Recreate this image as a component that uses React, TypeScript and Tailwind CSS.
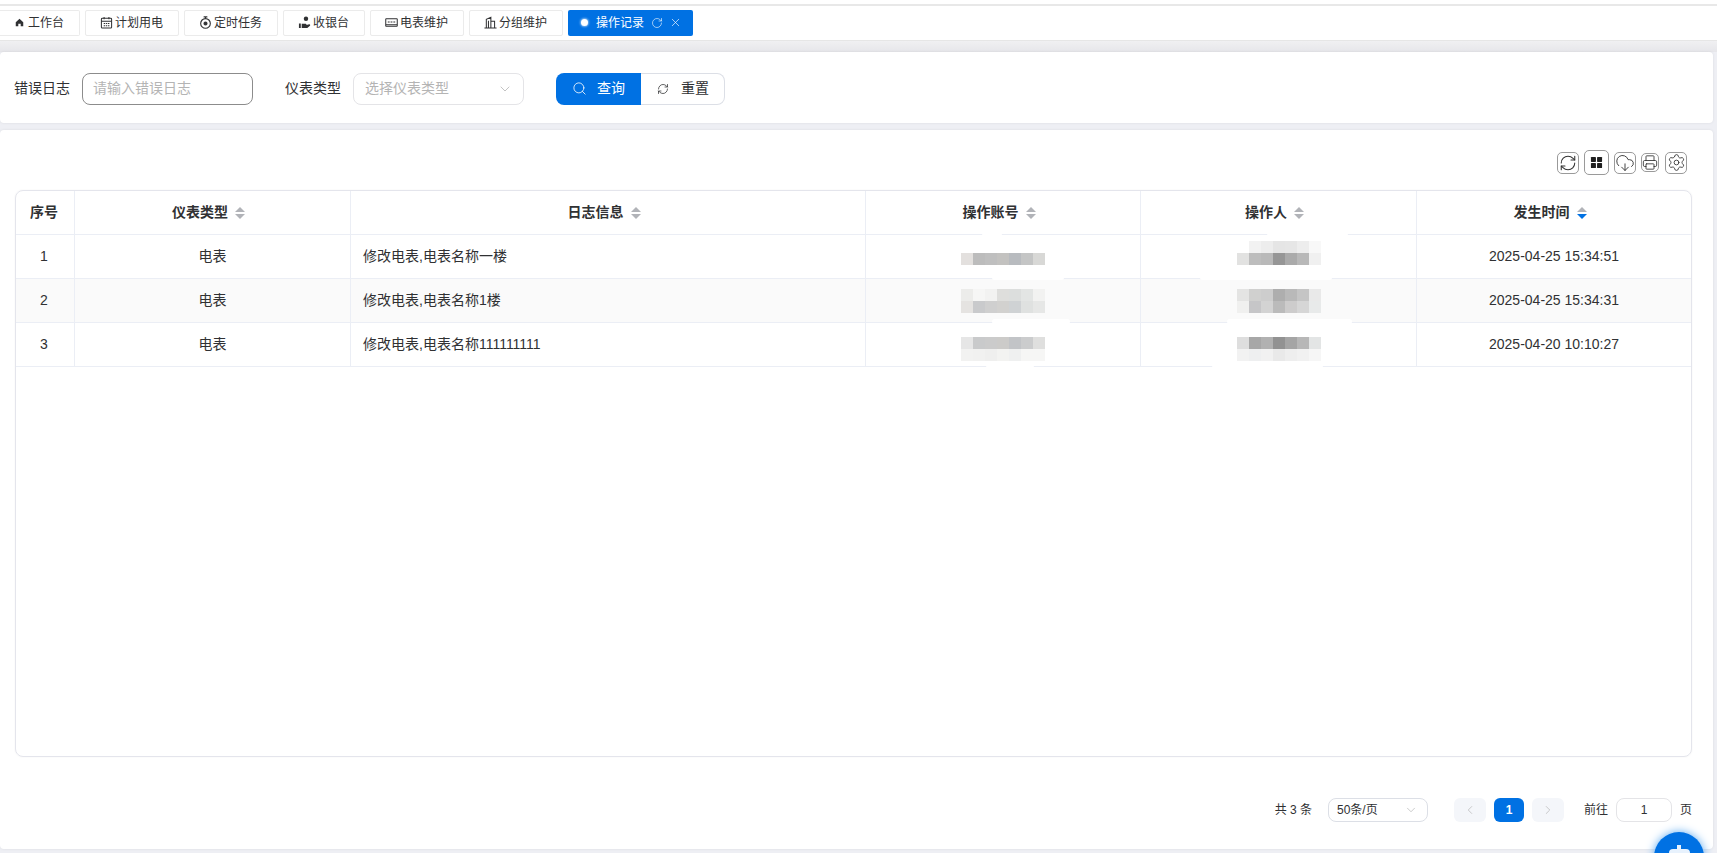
import { ChevronDown, ChevronLeft, ChevronRight, CloudDownload, Printer, RefreshCw, RotateCw, Search, Settings, X } from "lucide-react"
import type { ReactNode } from "react"

function HomeIcon() {
  return (
    <svg viewBox="0 0 12 12" className="h-[9px] w-[9px] fill-[#303133]">
      <path d="M6 1 11 5.6V11H7.6V7.6H4.4V11H1V5.6Z" />
    </svg>
  )
}

function CalendarIcon() {
  return (
    <svg viewBox="0 0 14 14" className="h-[13px] w-[13px] fill-none stroke-[#303133] stroke-[1.1]">
      <rect x="1.5" y="2.5" width="11" height="10.5" rx="1" />
      <path d="M1.5 5.6h11M4.4 1v2.6M9.6 1v2.6M4 8h1.5M6.3 8h1.5M8.6 8h1.5M4 10.4h1.5M6.3 10.4h1.5M8.6 10.4h1.5" />
    </svg>
  )
}

function TimerIcon() {
  return (
    <svg viewBox="0 0 14 14" className="h-[13px] w-[13px] fill-none stroke-[#303133] stroke-[1.2]">
      <circle cx="7" cy="8" r="5.2" />
      <circle cx="7" cy="8" r="1.6" className="fill-[#303133]" />
      <path d="M5 1h4M7 1v1.6" />
    </svg>
  )
}

function CashierIcon() {
  return (
    <svg viewBox="0 0 14 14" className="h-[13px] w-[13px] fill-[#303133]">
      <circle cx="8.6" cy="3" r="2.4" />
      <path d="M1 8h2v5H1ZM4 8.4h3.6c1 0 1.6.6 1.7 1.4L12 8.9c.8-.3 1.6.7.9 1.5L10 13H4Z" />
    </svg>
  )
}

function MeterIcon() {
  return (
    <svg viewBox="0 0 14 14" className="h-[13px] w-[13px] fill-none stroke-[#303133] stroke-[1.1]">
      <rect x="0.8" y="3" width="12.4" height="8" rx="0.6" />
      <path d="M3 6.5h2M6 6.5h2M9 6.5h2M1 9.4h12" />
    </svg>
  )
}

function GroupIcon() {
  return (
    <svg viewBox="0 0 14 14" className="h-[13px] w-[13px] fill-none stroke-[#303133] stroke-[1.1]">
      <path d="M.5 13h13M2.5 13V3.6L7.4 1.4V13M7.4 5.6h4V13M4.8 13V5" />
    </svg>
  )
}

function GridIcon() {
  return (
    <svg viewBox="0 0 14 14" className="h-[13px] w-[13px] fill-[#1f1f1f]">
      <rect x="1" y="1" width="5.4" height="5.4" rx="0.7" />
      <rect x="7.6" y="1" width="5.4" height="5.4" rx="0.7" />
      <rect x="1" y="7.6" width="5.4" height="5.4" rx="0.7" />
      <rect x="7.6" y="7.6" width="5.4" height="5.4" rx="0.7" />
    </svg>
  )
}

function SortIcon({ active }: { active?: boolean }) {
  return (
    <svg viewBox="0 0 10 12" className="ml-[7px] mr-[8px] h-[12px] w-[10px]">
      <path d="M5 0 10 5H0Z" className="fill-[#b1b3b8]" />
      <path d="M0 7h10L5 12Z" className={active ? "fill-[#0071e3]" : "fill-[#b1b3b8]"} />
    </svg>
  )
}

const tabs = [
  { name: "计划用电", icon: <CalendarIcon /> },
  { name: "定时任务", icon: <TimerIcon /> },
  { name: "收银台", icon: <CashierIcon /> },
  { name: "电表维护", icon: <MeterIcon /> },
  { name: "分组维护", icon: <GroupIcon /> },
]

function TabBar() {
  return (
    <div className="flex h-[35px] items-center gap-[5px] border-b border-[#e6e6e6] bg-white pb-px text-[12px] text-[#303133]">
      <div className="flex h-[26px] w-[80px] items-center justify-end gap-[4px] rounded-r-[2px] border border-l-0 border-[#ebebeb] pr-[15px]">
        <HomeIcon />
        工作台
      </div>
      {tabs.map((tab) => (
        <div key={tab.name} className="flex h-[26px] items-center gap-[2px] rounded-[2px] border border-[#ebebeb] pl-[14px] pr-[15px]">
          {tab.icon}
          {tab.name}
        </div>
      ))}
      <div className="flex h-[26px] w-[125px] items-center rounded-[2px] bg-[#0071e3] pl-[13px] text-white">
        <span className="mr-[8px] h-[7px] w-[7px] rounded-full bg-white shadow-[0_0_2px_1px_rgba(255,255,255,0.5)]" />
        <span>操作记录</span>
        <RotateCw size={12} strokeWidth={1.2} className="ml-[7px]" />
        <X size={13} strokeWidth={1.2} className="ml-[6px]" />
      </div>
    </div>
  )
}

function SearchCard() {
  return (
    <div className="mr-[4px] flex h-[71px] items-center rounded-[4px] bg-white pt-[2px] text-[14px] text-[#303133] shadow-[0_0_3px_rgba(0,0,0,0.08)]">
      <span className="ml-[14px] w-[56px]">错误日志</span>
      <div className="ml-[12px] flex h-[32px] w-[171px] items-center rounded-[8px] border border-[#8c8c8c] px-[10px] text-[#b4b4b4]">
        请输入错误日志
      </div>
      <span className="ml-[32px] w-[56px]">仪表类型</span>
      <div className="ml-[12px] flex h-[32px] w-[171px] items-center justify-between rounded-[8px] border border-[#e4e4e7] pl-[11px] pr-[10px] text-[#b4b4b4]">
        选择仪表类型
        <ChevronDown size={16} strokeWidth={1.2} color="#b4b4b4" />
      </div>
      <div className="ml-[32px] flex h-[32px] w-[169px]">
        <div className="flex w-[85px] items-center rounded-l-[8px] bg-[#0071e3] pl-[16px] text-white">
          <Search size={15} strokeWidth={1.3} />
          <span className="ml-[10px]">查询</span>
        </div>
        <div className="flex w-[84px] items-center rounded-r-[8px] border border-l-0 border-[#dcdfe6] pl-[16px]">
          <RefreshCw size={12} strokeWidth={1.5} />
          <span className="ml-[12px]">重置</span>
        </div>
      </div>
    </div>
  )
}

function ToolButton({ children, className }: { children: ReactNode; className: string }) {
  return (
    <div className={`flex items-center justify-center rounded-[5px] border border-[#9a9a9a] text-[#333] ${className}`}>
      {children}
    </div>
  )
}

function Toolbar() {
  return (
    <div className="mb-[15px] flex h-[25px] items-center justify-end pr-[5px]">
      <ToolButton className="h-[22px] w-[22px]">
        <RefreshCw size={18} strokeWidth={1.4} />
      </ToolButton>
      <ToolButton className="ml-[5px] h-[25px] w-[25px]">
        <GridIcon />
      </ToolButton>
      <ToolButton className="ml-[5px] h-[22px] w-[22px]">
        <CloudDownload size={20} strokeWidth={1.1} />
      </ToolButton>
      <ToolButton className="ml-[5px] h-[19px] w-[18px]">
        <Printer size={17} strokeWidth={1.3} />
      </ToolButton>
      <ToolButton className="ml-[6px] h-[22px] w-[22px]">
        <Settings size={19} strokeWidth={1.1} />
      </ToolButton>
    </div>
  )
}

function Mosaic({ rows, className }: { rows: string[][]; className: string }) {
  return (
    <div className={`mx-auto w-fit ${className}`}>
      {rows.map((row, i) => (
        <div key={i} className="flex">
          {row.map((color, j) => (
            <span key={j} className={`h-[12px] w-[12px] ${color}`} />
          ))}
        </div>
      ))}
    </div>
  )
}

const rowsData = [
  {
    id: 1,
    info: "修改电表,电表名称一楼",
    time: "2025-04-25 15:34:51",
    account: { className: "mt-[18px]", rows: [["bg-[#e3e0de]", "bg-[#bcbcbc]", "bg-[#bfbfbf]", "bg-[#c3c2c0]", "bg-[#b8bbbf]", "bg-[#c4c5c5]", "bg-[#d8d8d6]"]] },
    person: {
      className: "mt-[6px]",
      rows: [
        ["bg-white", "bg-[#f2f2f2]", "bg-[#ededed]", "bg-[#e5e5e5]", "bg-[#e6e6e6]", "bg-[#ededed]", "bg-[#f8f8f8]"],
        ["bg-[#e2e2e1]", "bg-[#bdbdbd]", "bg-[#b9b9b9]", "bg-[#969696]", "bg-[#aaaaaa]", "bg-[#b8b8b8]", "bg-[#f0f0f0]"],
      ],
    },
  },
  {
    id: 2,
    info: "修改电表,电表名称1楼",
    time: "2025-04-25 15:34:31",
    account: {
      className: "mt-[10px]",
      rows: [
        ["bg-[#ececea]", "bg-[#f6f6f5]", "bg-[#f2f2f1]", "bg-[#dededc]", "bg-[#dcdedd]", "bg-[#e3e5e4]", "bg-[#f2f2f1]"],
        ["bg-[#e5e3e1]", "bg-[#c9cacc]", "bg-[#cfcfcf]", "bg-[#d2d1cf]", "bg-[#cfd2d4]", "bg-[#dfe1e0]", "bg-[#e6e7e6]"],
      ],
    },
    person: {
      className: "mt-[10px]",
      rows: [
        ["bg-[#e4e4e3]", "bg-[#d0d0cf]", "bg-[#cdcdcd]", "bg-[#aeaeae]", "bg-[#b9b9b9]", "bg-[#c5c5c5]", "bg-[#e9e9e9]"],
        ["bg-[#f0f0ef]", "bg-[#c6c6c8]", "bg-[#d3d3d3]", "bg-[#bbbbbb]", "bg-[#cdcccc]", "bg-[#d6d6d6]", "bg-[#e8eaea]"],
      ],
    },
  },
  {
    id: 3,
    info: "修改电表,电表名称111111111",
    time: "2025-04-20 10:10:27",
    account: {
      className: "mt-[14px]",
      rows: [
        ["bg-[#e6e6e6]", "bg-[#c9cacb]", "bg-[#cbcbcb]", "bg-[#cccbc9]", "bg-[#c2c4c7]", "bg-[#cbcccd]", "bg-[#dfdfde]"],
        ["bg-[#f2f2f1]", "bg-[#f1f1f0]", "bg-[#efefee]", "bg-[#f3f3f1]", "bg-[#eff0f0]", "bg-[#f6f6f5]", "bg-[#f6f6f5]"],
      ],
    },
    person: {
      className: "mt-[14px]",
      rows: [
        ["bg-[#dedede]", "bg-[#a7a7a7]", "bg-[#b1b1b1]", "bg-[#929292]", "bg-[#a5a5a5]", "bg-[#b7b7b7]", "bg-[#e3e5e5]"],
        ["bg-[#f2f2f2]", "bg-[#eeeff0]", "bg-[#f1f1f1]", "bg-[#e9e9e9]", "bg-[#eeeeee]", "bg-[#f1f1f1]", "bg-[#f6f6f6]"],
      ],
    },
  },
]

// white brush strokes that wiped the row lines around the blurred cells
const smears = [
  "left-[982px] top-[231px] w-[20px]",
  "left-[1267px] top-[231px] w-[81px]",
  "left-[992px] top-[275px] w-[72px]",
  "left-[1200px] top-[275px] w-[132px]",
  "left-[992px] top-[319px] w-[78px]",
  "left-[1227px] top-[319px] w-[125px]",
  "left-[986px] top-[363px] w-[48px]",
  "left-[1212px] top-[363px] w-[111px]",
]

const thClass = "border-b border-r border-[#ebeef5] font-bold last:border-r-0"
const tdClass = "h-[44px] border-b border-r border-[#ebeef5] p-0 font-normal last:border-r-0"

function HeadCell({ label, active }: { label: string; active?: boolean }) {
  return (
    <th className={thClass}>
      <div className="flex items-center justify-center">
        {label}
        <SortIcon active={active} />
      </div>
    </th>
  )
}

function LogTable() {
  return (
    <div className="h-[567px] overflow-hidden rounded-[8px] border border-[#e4e5ec] shadow-[0_0_2px_rgba(0,0,0,0.06)]">
      <table className="w-full table-fixed border-separate border-spacing-0 text-[14px] text-[#303133]">
        <colgroup>
          <col className="w-[59px]" />
          <col className="w-[276px]" />
          <col className="w-[515px]" />
          <col className="w-[275px]" />
          <col className="w-[276px]" />
          <col />
        </colgroup>
        <thead>
          <tr className="h-[44px]">
            <th className={`${thClass} pr-[2px]`}>序号</th>
            <HeadCell label="仪表类型" />
            <HeadCell label="日志信息" />
            <HeadCell label="操作账号" />
            <HeadCell label="操作人" />
            <HeadCell label="发生时间" active />
          </tr>
        </thead>
        <tbody>
          {rowsData.map((row, i) => (
            <tr key={row.id} className={i === 1 ? "bg-[#fafafa]" : ""}>
              <td className={`${tdClass} pr-[2px] text-center`}>{row.id}</td>
              <td className={`${tdClass} text-center`}>电表</td>
              <td className={`${tdClass} pl-[12px]`}>{row.info}</td>
              <td className={`${tdClass} align-top`}>
                <Mosaic rows={row.account.rows} className={row.account.className} />
              </td>
              <td className={`${tdClass} align-top`}>
                <Mosaic rows={row.person.rows} className={row.person.className} />
              </td>
              <td className={`${tdClass} text-center`}>{row.time}</td>
            </tr>
          ))}
        </tbody>
      </table>
    </div>
  )
}

function Pagination() {
  return (
    <div className="mt-[41px] flex h-[24px] items-center justify-end text-[12px] text-[#303133]">
      <span>共 3 条</span>
      <div className="ml-[16px] flex h-[24px] w-[100px] items-center justify-between rounded-[8px] border border-[#dcdfe6] pl-[8px] pr-[9px]">
        50条/页
        <ChevronDown size={14} strokeWidth={1.2} color="#b4b4b4" />
      </div>
      <div className="ml-[26px] flex h-[24px] w-[32px] items-center justify-center rounded-[6px] bg-[#f4f6fa] text-[#b4b4b4]">
        <ChevronLeft size={14} strokeWidth={1.2} />
      </div>
      <div className="ml-[8px] flex h-[24px] w-[30px] items-center justify-center rounded-[6px] bg-[#0071e3] font-bold text-white">1</div>
      <div className="ml-[8px] flex h-[24px] w-[32px] items-center justify-center rounded-[6px] bg-[#f4f6fa] text-[#b4b4b4]">
        <ChevronRight size={14} strokeWidth={1.2} />
      </div>
      <span className="ml-[20px]">前往</span>
      <div className="ml-[8px] flex h-[24px] w-[56px] items-center justify-center rounded-[8px] border border-[#e4e4e7]">1</div>
      <span className="ml-[8px]">页</span>
    </div>
  )
}

export default function App() {
  return (
    <div className="relative h-[853px] w-[1717px] overflow-hidden bg-[#eeeff4] font-['Liberation_Sans','Noto_Sans_CJK_SC',sans-serif]">
      <div className="h-[6px] border-b-2 border-[#e8e8e8] bg-white" />
      <TabBar />
      <div className="h-[11px] bg-gradient-to-b from-[#f0f0f2] to-[#e6e6ea]" />
      <SearchCard />
      <div className="mr-[4px] mt-[7px] h-[719px] rounded-[4px] bg-white pl-[15px] pr-[21px] pt-[20px] shadow-[0_0_3px_rgba(0,0,0,0.08)]">
        <Toolbar />
        <LogTable />
        <Pagination />
      </div>
      {smears.map((smear) => (
        <div key={smear} className={`absolute h-[5px] rounded-full bg-white ${smear}`} />
      ))}
      <div className="absolute left-[1654px] top-[832px] flex h-[50px] w-[50px] justify-center rounded-full bg-[#0071e3] shadow-[0_0_10px_#5aa8f0]">
        <div className="mt-[13px] flex flex-col items-center">
          <span className="h-[4px] w-[4px] bg-[#e8f2fd]" />
          <span className="h-[12px] w-[21px] rounded-[4px] bg-[#e8f2fd]" />
        </div>
      </div>
    </div>
  )
}
